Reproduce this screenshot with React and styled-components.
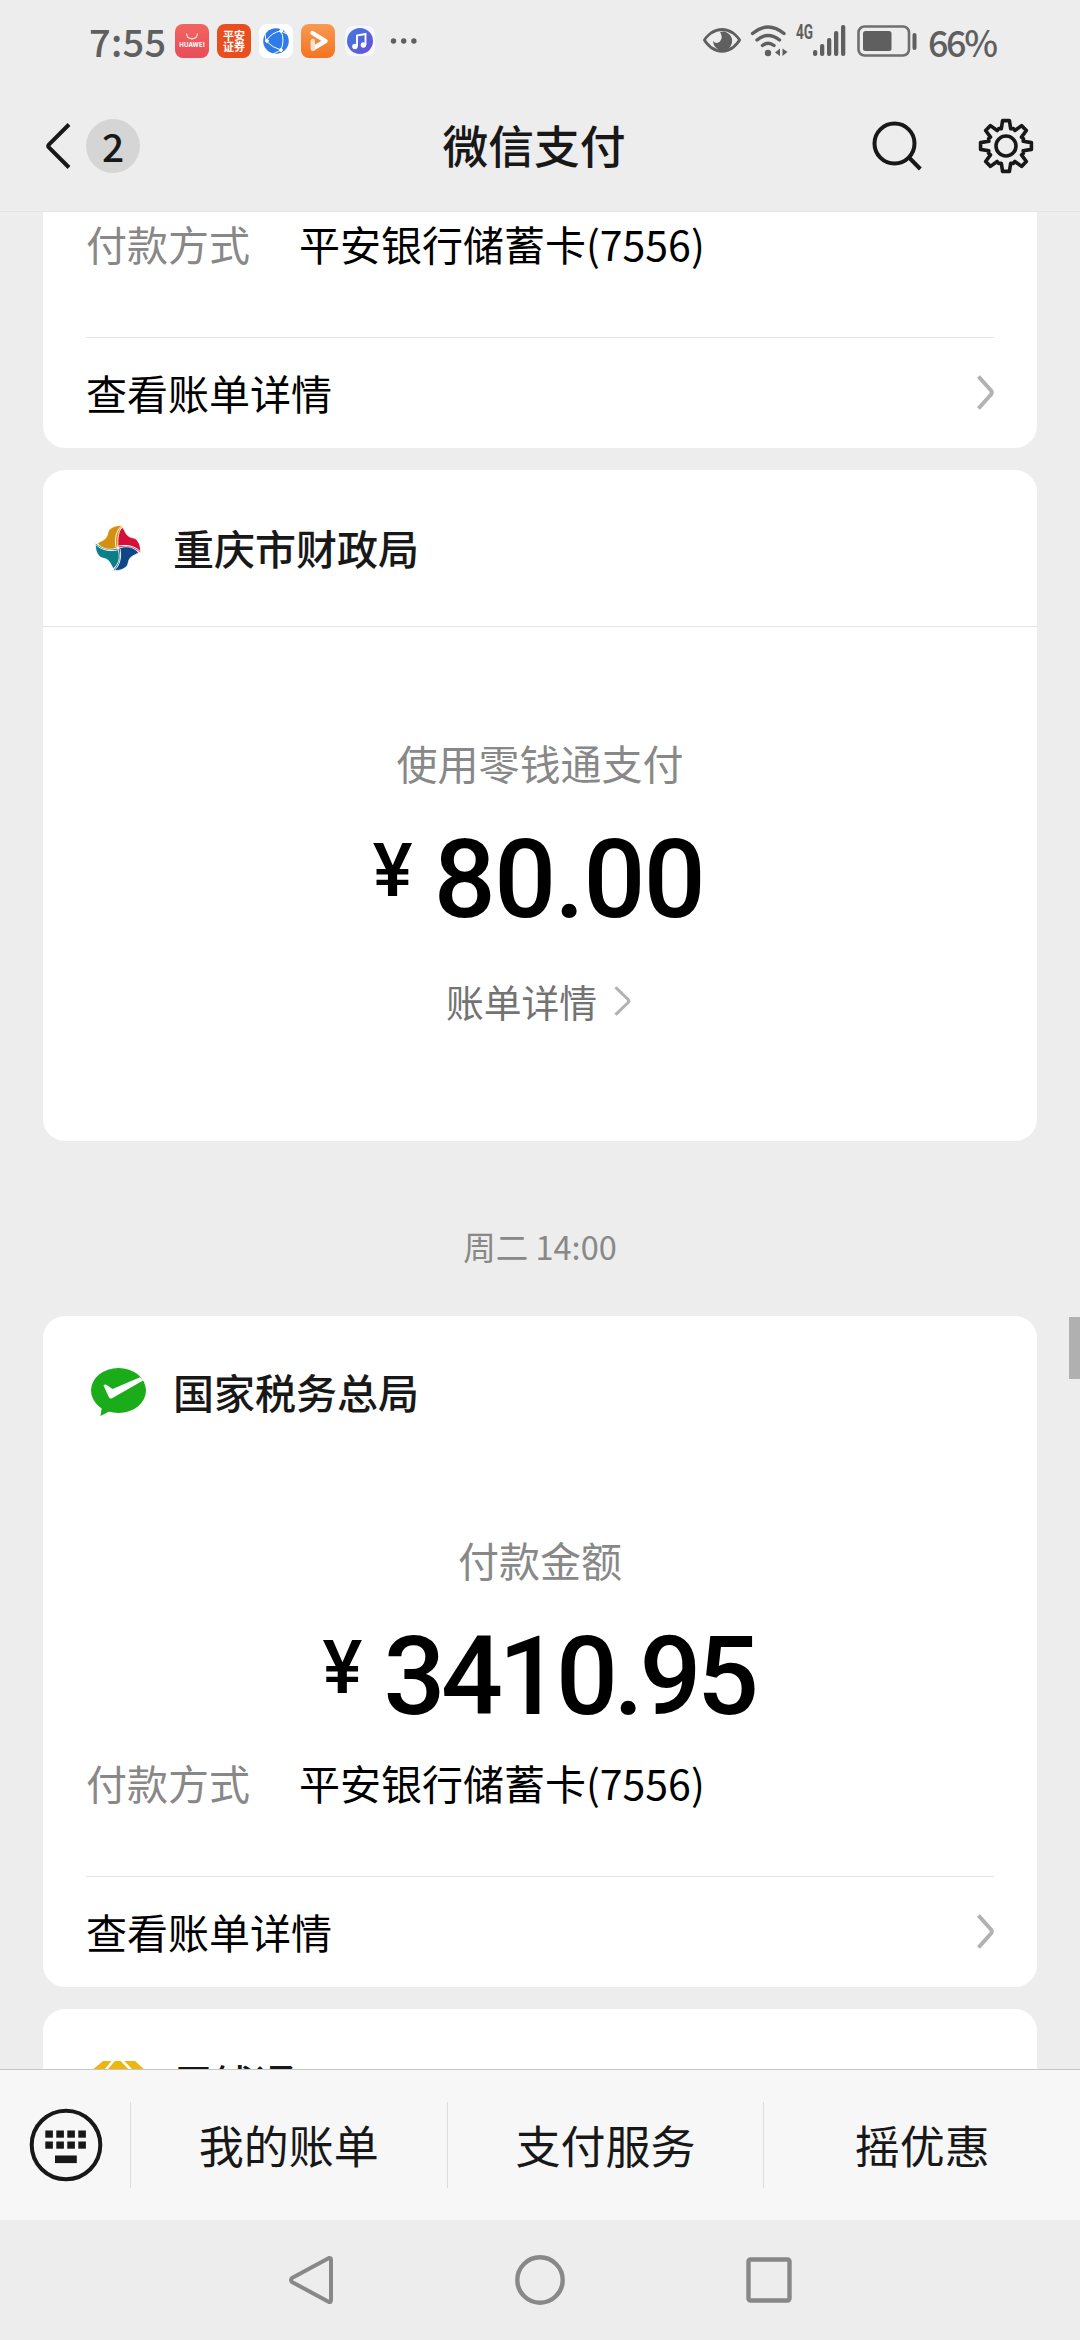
import React from 'react'
import styled, { createGlobalStyle } from 'styled-components'

const GlobalStyle = createGlobalStyle`
  * {
    box-sizing: border-box;
  }
  body {
    margin: 0;
    background: #ededed;
    font-family: 'Noto Sans CJK SC', sans-serif;
    -webkit-font-smoothing: antialiased;
  }
  svg {
    display: block;
    flex: none;
  }
`;

const Screen = styled.div`
  width: 1080px;
  height: 2340px;
  display: flex;
  flex-direction: column;
  background: #ededed;
  overflow: hidden;
`;

/* status bar */

const StatusBar = styled.div`
  height: 84px;
  flex: none;
  display: flex;
  justify-content: space-between;
  align-items: center;
  padding: 0 84px 2px 89px;
  color: #5f5f5f;
`;

const StatusGroup = styled.div`
  display: flex;
  align-items: center;
`;

const Clock = styled.span`
  width: 86px;
  font-size: 38px;
  font-weight: 500;
  line-height: 50px;
  letter-spacing: 0.3px;
`;

const AppTile = styled.div`
  width: ${props => props.$size || 34}px;
  height: ${props => props.$size || 34}px;
  margin-right: ${props => props.$gap || 8}px;
  border-radius: 8px;
  background: ${props => props.$bg};
  color: #fff;
  display: flex;
  flex-direction: column;
  align-items: center;
  justify-content: center;
  flex: none;
`;

const StoreName = styled.span`
  font-family: 'Inter', sans-serif;
  font-size: 6px;
  font-weight: 700;
  line-height: 8px;
  letter-spacing: 0.2px;
`;

const BrokerName = styled.span`
  width: 22px;
  font-size: 11px;
  font-weight: 700;
  line-height: 11px;
  word-break: break-all;
`;

const NetType = styled.span`
  width: 17px;
  margin: 0 0 18px 8px;
  font-family: 'Roboto', sans-serif;
  font-size: 20px;
  font-weight: 700;
  line-height: 20px;
  transform: scaleX(0.68);
  transform-origin: left;
`;

const Percent = styled.span`
  font-size: 36px;
  line-height: 50px;
  font-weight: 500;
  width: 68px;
  margin-left: 10px;
  padding-bottom: 1px;
  letter-spacing: -2.4px;
  white-space: nowrap;
`;

const StatusGap = styled.i`
  width: ${props => props.$w}px;
`;

/* title bar */

const TitleBar = styled.div`
  height: 128px;
  flex: none;
  display: grid;
  grid-template-columns: 1fr auto 1fr;
  align-items: center;
  padding: 0 46px 3px 44px;
  border-bottom: 1px solid #e4e4e4;
  color: #181818;
`;

const BackGroup = styled.div`
  display: flex;
  align-items: center;
  gap: 14px;
`;

const UnreadBadge = styled.span`
  width: 54px;
  height: 54px;
  border-radius: 50%;
  background: #d5d5d5;
  font-size: 39px;
  font-weight: 500;
  line-height: 52px;
  text-align: center;
`;

const Title = styled.h1`
  margin: 0;
  padding: 0 10px 5px 0;
  font-size: 45.8px;
  font-weight: 500;
  line-height: 60px;
`;

const TitleActions = styled.div`
  display: flex;
  align-items: center;
  justify-content: flex-end;
  gap: 56px;
`;

/* message list */

const Feed = styled.div`
  flex: 1;
  min-height: 0;
  position: relative;
  overflow: hidden;
  padding: 0 43px;
`;

const ScrollThumb = styled.div`
  position: absolute;
  right: 0;
  top: 1105px;
  width: 11px;
  height: 62px;
  background: #b0b0b0;
`;

const Card = styled.div`
  background: #fff;
  border-radius: ${props => (props.$cut ? '0 0 22px 22px' : '22px')};
  margin-bottom: ${props => (props.$last ? 0 : 22)}px;
  padding-top: ${props => (props.$cut ? 1 : 0)}px;
  height: ${props => (props.$cut ? 236 : 671)}px;
`;

const CardHead = styled.div`
  height: ${props => (props.$line ? 157 : 152)}px;
  display: flex;
  align-items: center;
  gap: 23px;
  padding-left: 43px;
  border-bottom: ${props => (props.$line ? '1px solid #e5e5e5' : 'none')};
`;

const CardName = styled.h2`
  margin: 0;
  padding-bottom: ${props => props.$lift || 3}px;
  font-size: 41px;
  font-weight: 500;
  line-height: 60px;
  color: #181818;
`;

const PayLabel = styled.div`
  margin-top: ${props => props.$top}px;
  font-size: 41px;
  line-height: 60px;
  text-align: center;
  color: #888;
`;

const Amount = styled.div`
  margin-top: ${props => props.$top}px;
  padding-right: 6px;
  height: 110px;
  display: flex;
  justify-content: center;
  align-items: center;
  gap: 18px;
  font-family: 'Roboto', sans-serif;
  font-weight: 500;
  color: #000;
`;

const Yen = styled.span`
  width: 46px;
  margin-bottom: 20px;
  font-size: 75px;
  line-height: 90px;
  text-align: center;
`;

const Digits = styled.span`
  font-size: 109px;
  line-height: 110px;
  letter-spacing: ${props => props.$spacing}px;
`;

const DetailLink = styled.div`
  margin-top: 40px;
  height: 51px;
  padding-right: 3px;
  display: flex;
  justify-content: center;
  align-items: center;
  gap: 17px;
  font-size: 37.8px;
  line-height: 50px;
  color: #737373;
`;

const MethodRow = styled.div`
  display: flex;
  margin-top: ${props => props.$top || 0}px;
  padding-left: 43px;
  font-size: 41px;
  line-height: 60px;
  color: #000;
`;

const MethodKey = styled.span`
  width: 213px;
  color: #888;
`;

const CardFoot = styled.div`
  margin: 64px 43px 0;
  height: 111px;
  border-top: 1px solid #e5e5e5;
  display: flex;
  align-items: center;
  justify-content: space-between;
  padding-bottom: 1px;
  font-size: 41px;
  line-height: 60px;
  color: #000;
`;

const FootText = styled.span`
  padding-bottom: 2px;
`;

const TimeMark = styled.div`
  margin: 75px 0 40px;
  font-size: 32.5px;
  line-height: 60px;
  text-align: center;
  color: #888;
`;

/* bottom menu */

const MenuBar = styled.div`
  height: 151px;
  flex: none;
  display: flex;
  align-items: center;
  background: #f7f7f7;
  border-top: 1px solid #c6c6c6;
`;

const KeyboardButton = styled.div`
  width: 130px;
  padding-left: 29px;
`;

const MenuItem = styled.div`
  flex: 1;
  height: 86px;
  border-left: 1px solid #dcdcdc;
  font-size: 45px;
  line-height: 86px;
  text-align: center;
  color: #181818;
`;

const SystemNav = styled.div`
  height: 120px;
  flex: none;
  display: flex;
  align-items: center;
  justify-content: center;
  gap: 181px;
`;

/* icons */

const Chevron = ({ w = 17, h = 35, stroke = 4 }) => (
  <svg width={w} height={h} viewBox="0 0 17 35" fill="none" stroke="#b2b2b2" strokeWidth={stroke} preserveAspectRatio="none">
    <path d="M1.5 1.5 L14 15.5 Q15.5 17.5 14 19.5 L1.5 33.5" />
  </svg>
)

const gearPath = () => {
  const pts = []
  const toothShape = [[-4.7, -17.2], [-3.4, -25.4], [3.4, -25.4], [4.7, -17.2], [7.4, -17.4]]
  for (let i = 0; i < 8; i++) {
    const a = (i * Math.PI) / 4
    toothShape.forEach(([x, y]) => {
      pts.push(`${(x * Math.cos(a) - y * Math.sin(a)).toFixed(2)} ${(x * Math.sin(a) + y * Math.cos(a)).toFixed(2)}`)
    })
  }
  return `M${pts.join('L')}Z`
}

const GearIcon = () => (
  <svg width="56" height="56" viewBox="-28 -28 56 56" fill="none" stroke="#181818" strokeWidth="3.6" strokeLinejoin="round">
    <path d={gearPath()} />
    <circle r="10" />
  </svg>
)

const SearchIcon = () => (
  <svg width="50" height="50" viewBox="0 0 50 50" fill="none" stroke="#181818" strokeWidth="4">
    <circle cx="22.5" cy="22.5" r="20" />
    <path d="M37 36.5 L48.3 48" />
  </svg>
)

const BackIcon = () => (
  <svg width="28" height="48" viewBox="0 0 28 48" fill="none" stroke="#181818" strokeWidth="4">
    <path d="M25 2.5 L4.9 22.5 Q3.6 24 4.9 25.5 L25 45.5" />
  </svg>
)

const petal = 'M14-62C22-50 24-38 36-33C44-30 50-31 56-25C66-14 69 0 67 16C56 2 30-2 2 0C-8-20-6-46 14-62Z'

const FinanceLogo = () => (
  <svg width="64" height="64" viewBox="-96 -96 192 192">
    {['#d50f35', '#0f4687', '#0b7f86', '#d6900f'].map((color, i) => (
      <g key={color} transform={`rotate(${i * 90})`}>
        <path d={petal} fill={color} stroke="#fff" strokeWidth="2.5" />
        <path d="M66 10C52-5 28-11 2-6" fill="none" stroke="#fff" strokeWidth="2.8" />
      </g>
    ))}
  </svg>
)

const PayLogo = () => (
  <svg width="64" height="64" viewBox="0 0 64 64">
    <ellipse cx="32.5" cy="30.5" rx="27.5" ry="22.5" fill="#1aad19" />
    <path d="M16 46 L14.5 56 L26 50 Z" fill="#1aad19" />
    <path d="M17.5 25.5 Q19 23.5 21.5 25.5 L26.5 29 L54 17.2 L57.5 20.2 L26.5 38 Q24 39.5 22.8 37 Z" fill="#fff" />
  </svg>
)

const GemLogo = () => (
  <svg width="64" height="64" viewBox="0 0 64 64">
    <path d="M17 8 H49 L60 18 L32 56 L5 18 Z" fill="#edb60f" />
    <path d="M28 7 L18 19 M35.500 7 L47 19" stroke="#fff" strokeWidth="2.600" />
  </svg>
)

const KeyboardIcon = () => (
  <svg width="74" height="74" viewBox="0 0 74 74" fill="#181818">
    <circle cx="37" cy="37" r="34.3" fill="none" stroke="#181818" strokeWidth="4" />
    {[0, 1].map(r =>
      [0, 1, 2, 3].map(c => <rect key={`${r}${c}`} x={16.3 + c * 11} y={22.5 + r * 11} width="7.6" height="7.2" />)
    )}
    <rect x="26" y="47.5" width="21.8" height="7.6" />
  </svg>
)

const BrowserIcon = () => (
  <svg width="34" height="34" viewBox="0 0 34 34" fill="none" stroke="#fff" strokeWidth="1">
    <circle cx="17" cy="17" r="12.8" fill="#2f7bea" stroke="none" />
    <path d="M7 17 Q13 8 22 7 M7 17 Q14 24 22 26 M22 7 Q26 16 22 26 M7 17 L6 10 M22 26 L14 30 M22 7 L28 10" />
    <circle cx="8" cy="17" r="1.400" fill="#fff" />
    <circle cx="22" cy="7" r="1.400" fill="#fff" />
    <circle cx="22" cy="26" r="1.400" fill="#fff" />
  </svg>
)

const VideoIcon = () => (
  <svg width="34" height="34" viewBox="0 0 34 34" fill="none" stroke="#fff" strokeWidth="4.4" strokeLinecap="round" strokeLinejoin="round">
    <path d="M11.500 9 L24.500 17 L12 24.500" />
    <path d="M11.800 17 V24.500" stroke="#ffe3cc" />
  </svg>
)

const MusicIcon = () => (
  <svg width="30" height="30" viewBox="0 0 30 30">
    <defs>
      <linearGradient id="music" x1="0" y1="0" x2="1" y2="1">
        <stop offset="0" stopColor="#3f7be0" />
        <stop offset="1" stopColor="#6a4fd6" />
      </linearGradient>
    </defs>
    <circle cx="15" cy="15" r="13" fill="url(#music)" />
    <path d="M12 20.500 V9.500 L20.500 8 V19" fill="none" stroke="#fff" strokeWidth="1.9" />
    <circle cx="9.900" cy="20.500" r="2.700" fill="#fff" />
    <circle cx="18.400" cy="19" r="2.700" fill="#fff" />
  </svg>
)

const BagHandle = () => (
  <svg width="14" height="8" viewBox="0 0 14 8" fill="none" stroke="#ffd9d6" strokeWidth="1.3">
    <path d="M1.500 0.500 C2 7.500 12 7.500 12.500 0.500" />
  </svg>
)

const Dots = () => (
  <svg width="28" height="6" viewBox="0 0 28 6" fill="#5f5f5f">
    <circle cx="3.500" cy="3" r="2.700" />
    <circle cx="13.700" cy="3" r="2.700" />
    <circle cx="23.900" cy="3" r="2.700" />
  </svg>
)

const EyeIcon = () => (
  <svg width="40" height="28" viewBox="0 0 40 28">
    <path d="M2.500 13 Q4 10 9 6 Q20 -1 31 6 Q36 10 37.500 13 Q36 16 31 20.500 Q20 28 9 20.500 Q4 16 2.500 13Z" fill="none" stroke="#5f5f5f" strokeWidth="2.800" />
    <path d="M18 5 A9.500 9.500 0 1 1 11.200 14 Q14 17.500 18 14.500 Q21.500 10 18 5Z" fill="#5f5f5f" />
  </svg>
)

const WifiIcon = () => (
  <svg width="38" height="32" viewBox="0 0 38 32" fill="none" stroke="#5f5f5f" strokeWidth="3.400" strokeLinecap="round">
    <path d="M2.500 8.500 Q18 -4.500 34 8.500" />
    <path d="M7 15 Q18 6 29.500 15" />
    <path d="M12.500 20.500 Q18 16 24 20.500" />
    <circle cx="18" cy="28" r="3.200" fill="#5f5f5f" stroke="none" />
    <path d="M30 23.500 V31 L25 27.500 Z M32.500 23.500 V31 L37.500 27 Z" fill="#5f5f5f" stroke="none" />
  </svg>
)

const SignalIcon = () => (
  <svg width="33" height="32" viewBox="0 0 33 32" fill="#5f5f5f">
    {[6, 12, 18, 25, 31].map((h, i) => (
      <rect key={h} x={i * 7} y={31 - h} width="4.300" height={h} rx="2" />
    ))}
  </svg>
)

const BatteryIcon = () => (
  <svg width="61" height="34" viewBox="0 0 61 34">
    <rect x="1.500" y="2.500" width="50.500" height="29" rx="6" fill="none" stroke="#6f6f6f" strokeWidth="2.600" />
    <rect x="6" y="7" width="28.500" height="20" rx="2.500" fill="#5f5f5f" />
    <rect x="55.500" y="9" width="4" height="17" rx="2" fill="#5f5f5f" />
  </svg>
)

const NavBack = () => (
  <svg width="46" height="52" viewBox="0 0 46 52" fill="none" stroke="#888" strokeWidth="4" strokeLinejoin="round">
    <path d="M41 4 Q43 3.500 43 6 V46 Q43 48.500 41 48 L4 28 Q2 26 4 24 Z" />
  </svg>
)

const NavHome = () => (
  <svg width="50" height="50" viewBox="0 0 50 50" fill="none" stroke="#888" strokeWidth="4.400">
    <circle cx="25" cy="25" r="22.700" />
  </svg>
)

const NavRecent = () => (
  <svg width="46" height="46" viewBox="0 0 46 46" fill="none" stroke="#888" strokeWidth="4.400">
    <rect x="2.500" y="2.500" width="41" height="41" rx="2" />
  </svg>
)

/* pieces */

const Money = ({ value, top, spacing }) => (
  <Amount $top={top}>
    <Yen>¥</Yen>
    <Digits $spacing={spacing}>{value}</Digits>
  </Amount>
)

const Method = ({ top }) => (
  <MethodRow $top={top}>
    <MethodKey>付款方式</MethodKey>
    <span>平安银行储蓄卡(7556)</span>
  </MethodRow>
)

const BillFoot = () => (
  <CardFoot>
    <FootText>查看账单详情</FootText>
    <Chevron />
  </CardFoot>
)

const App = () => {
  const menus = ['我的账单', '支付服务', '摇优惠']

  return (
    <Screen>
      <GlobalStyle />
      <StatusBar>
        <StatusGroup>
          <Clock>7:55</Clock>
          <AppTile $bg="linear-gradient(#f0665f, #ea4c5a)">
            <BagHandle />
            <StoreName>HUAWEI</StoreName>
          </AppTile>
          <AppTile $bg="#e94e1f">
            <BrokerName>平安证券</BrokerName>
          </AppTile>
          <AppTile $bg="#fff"><BrowserIcon /></AppTile>
          <AppTile $bg="linear-gradient(#f79a52, #f5731f)" $gap={10}><VideoIcon /></AppTile>
          <AppTile $bg="#f7f6fb" $size={30} $gap={15}><MusicIcon /></AppTile>
          <Dots />
        </StatusGroup>
        <StatusGroup>
          <EyeIcon />
          <StatusGap $w={8} />
          <WifiIcon />
          <NetType>4G</NetType>
          <SignalIcon />
          <StatusGap $w={11} />
          <BatteryIcon />
          <Percent>66%</Percent>
        </StatusGroup>
      </StatusBar>

      <TitleBar>
        <BackGroup>
          <BackIcon />
          <UnreadBadge>2</UnreadBadge>
        </BackGroup>
        <Title>微信支付</Title>
        <TitleActions>
          <SearchIcon />
          <GearIcon />
        </TitleActions>
      </TitleBar>

      <Feed>
        <Card $cut>
          <Method />
          <BillFoot />
        </Card>

        <Card>
          <CardHead $line>
            <FinanceLogo />
            <CardName>重庆市财政局</CardName>
          </CardHead>
          <PayLabel $top={105}>使用零钱通支付</PayLabel>
          <Money value="80.00" top={33} spacing={-1.5} />
          <DetailLink>
            账单详情
            <Chevron w={17} h={30} stroke={3.2} />
          </DetailLink>
        </Card>

        <TimeMark>周二 14:00</TimeMark>

        <Card>
          <CardHead>
            <PayLogo />
            <CardName>国家税务总局</CardName>
          </CardHead>
          <PayLabel $top={61}>付款金额</PayLabel>
          <Money value="3410.95" top={33} spacing={-4.4} />
          <Method top={20} />
          <BillFoot />
        </Card>

        <Card $last>
          <CardHead>
            <GemLogo />
            <CardName $lift={7}>零钱通</CardName>
          </CardHead>
        </Card>
        <ScrollThumb />
      </Feed>

      <MenuBar>
        <KeyboardButton><KeyboardIcon /></KeyboardButton>
        {menus.map(name => <MenuItem key={name}>{name}</MenuItem>)}
      </MenuBar>

      <SystemNav>
        <NavBack />
        <NavHome />
        <NavRecent />
      </SystemNav>
    </Screen>
  )
}

export default App
